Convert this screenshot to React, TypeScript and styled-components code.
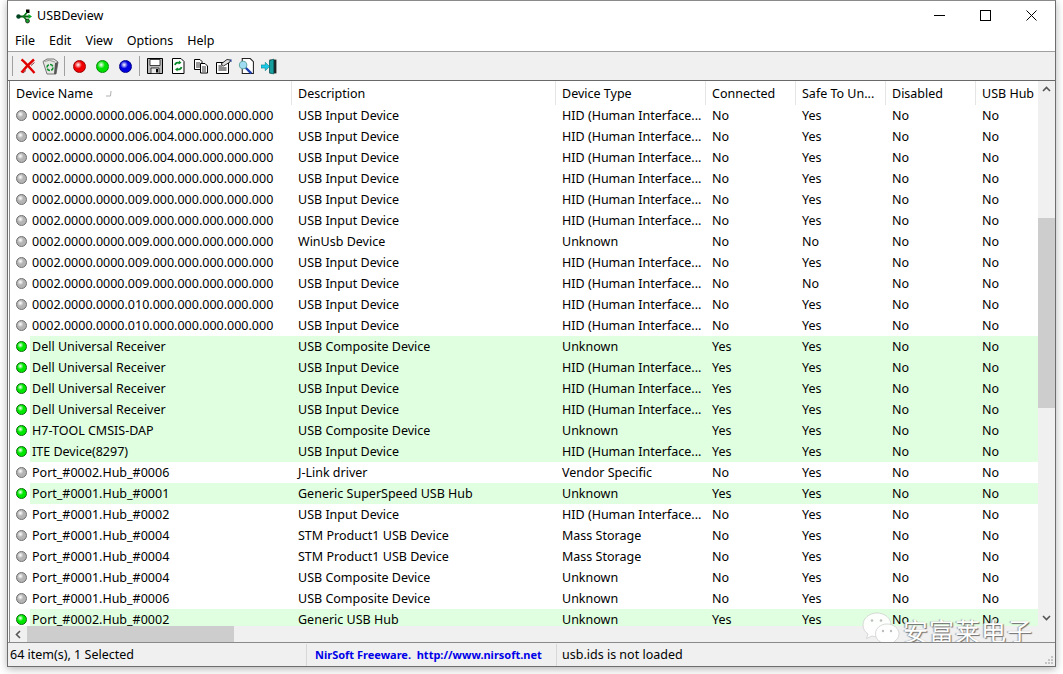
import styled, { createGlobalStyle } from 'styled-components';

const GlobalStyle = createGlobalStyle`
  html, body {
    margin: 0;
    padding: 0;
    background: #fff;
    overflow: hidden;
  }
  body {
    font-family: 'Noto Sans', 'Open Sans', sans-serif;
    font-size: 12.5px;
    color: #000;
  }
`;

type Device = {
  name: string;
  description: string;
  type: string;
  connected: string;
  safe: string;
};

const HID = 'HID (Human Interface...';
const INPUT = 'USB Input Device';
const COMPOSITE = 'USB Composite Device';

const devices: Device[] = [
  { name: '0002.0000.0000.006.004.000.000.000.000', description: INPUT, type: HID, connected: 'No', safe: 'Yes' },
  { name: '0002.0000.0000.006.004.000.000.000.000', description: INPUT, type: HID, connected: 'No', safe: 'Yes' },
  { name: '0002.0000.0000.006.004.000.000.000.000', description: INPUT, type: HID, connected: 'No', safe: 'Yes' },
  { name: '0002.0000.0000.009.000.000.000.000.000', description: INPUT, type: HID, connected: 'No', safe: 'Yes' },
  { name: '0002.0000.0000.009.000.000.000.000.000', description: INPUT, type: HID, connected: 'No', safe: 'Yes' },
  { name: '0002.0000.0000.009.000.000.000.000.000', description: INPUT, type: HID, connected: 'No', safe: 'Yes' },
  { name: '0002.0000.0000.009.000.000.000.000.000', description: 'WinUsb Device', type: 'Unknown', connected: 'No', safe: 'No' },
  { name: '0002.0000.0000.009.000.000.000.000.000', description: INPUT, type: HID, connected: 'No', safe: 'Yes' },
  { name: '0002.0000.0000.009.000.000.000.000.000', description: INPUT, type: HID, connected: 'No', safe: 'No' },
  { name: '0002.0000.0000.010.000.000.000.000.000', description: INPUT, type: HID, connected: 'No', safe: 'Yes' },
  { name: '0002.0000.0000.010.000.000.000.000.000', description: INPUT, type: HID, connected: 'No', safe: 'Yes' },
  { name: 'Dell Universal Receiver', description: COMPOSITE, type: 'Unknown', connected: 'Yes', safe: 'Yes' },
  { name: 'Dell Universal Receiver', description: INPUT, type: HID, connected: 'Yes', safe: 'Yes' },
  { name: 'Dell Universal Receiver', description: INPUT, type: HID, connected: 'Yes', safe: 'Yes' },
  { name: 'Dell Universal Receiver', description: INPUT, type: HID, connected: 'Yes', safe: 'Yes' },
  { name: 'H7-TOOL CMSIS-DAP', description: COMPOSITE, type: 'Unknown', connected: 'Yes', safe: 'Yes' },
  { name: 'ITE Device(8297)', description: INPUT, type: HID, connected: 'Yes', safe: 'Yes' },
  { name: 'Port_#0002.Hub_#0006', description: 'J-Link driver', type: 'Vendor Specific', connected: 'No', safe: 'Yes' },
  { name: 'Port_#0001.Hub_#0001', description: 'Generic SuperSpeed USB Hub', type: 'Unknown', connected: 'Yes', safe: 'Yes' },
  { name: 'Port_#0001.Hub_#0002', description: INPUT, type: HID, connected: 'No', safe: 'Yes' },
  { name: 'Port_#0001.Hub_#0004', description: 'STM Product1 USB Device', type: 'Mass Storage', connected: 'No', safe: 'Yes' },
  { name: 'Port_#0001.Hub_#0004', description: 'STM Product1 USB Device', type: 'Mass Storage', connected: 'No', safe: 'Yes' },
  { name: 'Port_#0001.Hub_#0004', description: COMPOSITE, type: 'Unknown', connected: 'No', safe: 'Yes' },
  { name: 'Port_#0001.Hub_#0006', description: COMPOSITE, type: 'Unknown', connected: 'No', safe: 'Yes' },
  { name: 'Port_#0002.Hub_#0002', description: 'Generic USB Hub', type: 'Unknown', connected: 'Yes', safe: 'Yes' },
];

const headers = ['Description', 'Device Type', 'Connected', 'Safe To Un...', 'Disabled', 'USB Hub'];
const COLUMNS = '264px 150px 90px 90px 90px 90px 62px';

export default function App() {
  return (
    <>
      <GlobalStyle />
      <Page>
        <Win>
          <TitleBar>
            <AppIcon />
            <TitleText>USBDeview</TitleText>
            <WindowButtons>
              <WindowButton>
                <svg width="11" height="11" viewBox="0 0 11 11"><path d="M0 5.5h11" stroke="#000" /></svg>
              </WindowButton>
              <WindowButton>
                <svg width="11" height="11" viewBox="0 0 11 11"><rect x=".5" y=".5" width="10" height="10" fill="none" stroke="#000" /></svg>
              </WindowButton>
              <WindowButton>
                <svg width="11" height="11" viewBox="0 0 11 11"><path d="M.5.5l10 10M10.5.5l-10 10" stroke="#000" /></svg>
              </WindowButton>
            </WindowButtons>
          </TitleBar>

          <MenuBar>
            <MenuItem>File</MenuItem>
            <MenuItem>Edit</MenuItem>
            <MenuItem>View</MenuItem>
            <MenuItem>Options</MenuItem>
            <MenuItem>Help</MenuItem>
          </MenuBar>

          <Toolbar>
            <ToolSeparator />
            <ToolButton><DeleteIcon /></ToolButton>
            <ToolButton><RecycleIcon /></ToolButton>
            <ToolSeparator />
            <ToolButton><Ball $size={13} $color="#f00000" $dark="#900" /></ToolButton>
            <ToolButton><Ball $size={13} $color="#00e000" $dark="#080" /></ToolButton>
            <ToolButton><Ball $size={13} $color="#0000e0" $dark="#008" /></ToolButton>
            <ToolSeparator />
            <ToolButton><SaveIcon /></ToolButton>
            <ToolButton><RefreshIcon /></ToolButton>
            <ToolButton><CopyIcon /></ToolButton>
            <ToolButton><PropertiesIcon /></ToolButton>
            <ToolButton><FindIcon /></ToolButton>
            <ToolButton><ExitIcon /></ToolButton>
          </Toolbar>

          <ListArea>
            <ListMain>
              <HeaderRow>
                <NameHeader>
                  Device Name
                  <SortMark viewBox="0 0 7 7" width="7" height="7">
                    <path d="M1 6h4.5L6 1" fill="none" stroke="#b0b0b0" />
                  </SortMark>
                </NameHeader>
                <Columns>
                  {headers.map((h) => (
                    <HeaderCell key={h}>{h}</HeaderCell>
                  ))}
                </Columns>
              </HeaderRow>

              <Rows>
                {devices.map((d, i) => {
                  const on = d.connected === 'Yes';
                  return (
                    <Row key={i}>
                      <BallCell>
                        {on ? (
                          <Ball $size={11} $color="#00e800" $dark="#006a00" />
                        ) : (
                          <Ball $size={11} $color="#b4b4b4" $dark="#6c6c6c" />
                        )}
                      </BallCell>
                      <RowBody $on={on}>
                        <NameCell>{d.name}</NameCell>
                        <Columns>
                          <Cell>{d.description}</Cell>
                          <Cell>{d.type}</Cell>
                          <Cell>{d.connected}</Cell>
                          <Cell>{d.safe}</Cell>
                          <Cell>No</Cell>
                          <Cell>No</Cell>
                        </Columns>
                      </RowBody>
                    </Row>
                  );
                })}
              </Rows>

              <HScroll>
                <ScrollArrow>
                  <svg width="9" height="9" viewBox="0 0 9 9"><path d="M6 1L2.5 4.5 6 8" fill="none" stroke="#555" strokeWidth="1.6" /></svg>
                </ScrollArrow>
                <HThumb />
              </HScroll>
            </ListMain>

            <VScroll>
              <ScrollArrow>
                <svg width="9" height="9" viewBox="0 0 9 9"><path d="M1 6l3.5-3.5L8 6" fill="none" stroke="#555" strokeWidth="1.6" /></svg>
              </ScrollArrow>
              <VThumb />
              <ScrollArrow>
                <svg width="9" height="9" viewBox="0 0 9 9"><path d="M1 3l3.5 3.5L8 3" fill="none" stroke="#555" strokeWidth="1.6" /></svg>
              </ScrollArrow>
              <Corner />
            </VScroll>

            <Watermark>
              <WeChatIcon />
              <WatermarkText>安富莱电子</WatermarkText>
            </Watermark>
          </ListArea>

          <StatusBar>
            <StatusCount>64 item(s), 1 Selected</StatusCount>
            <StatusLink>NirSoft Freeware.&nbsp; http://www.nirsoft.net</StatusLink>
            <StatusNote>usb.ids is not loaded</StatusNote>
            <Grip viewBox="0 0 9 9" width="9" height="9">
              <path d="M7 1h2v2H7zM4 4h2v2H4zM7 4h2v2H7zM1 7h2v2H1zM4 7h2v2H4zM7 7h2v2H7z" fill="#c4c4c4" />
            </Grip>
          </StatusBar>
        </Win>
      </Page>
    </>
  );
}

function AppIcon() {
  return (
    <TitleIcon viewBox="0 0 16 16" width="16" height="16">
      <path d="M1.5 8.5H14" stroke="#0a5a12" strokeWidth="2" />
      <path d="M10 1.5h3.5v3.5H10z" fill="#000" />
      <path d="M11 4.5L7.5 8.5l3.5 4" fill="none" stroke="#0a7a1a" strokeWidth="1.8" />
      <circle cx="2.5" cy="8.5" r="2.2" fill="#042" />
      <path d="M12.5 6l3.5 2.5-3.5 2.5z" fill="#0a2" />
      <circle cx="11.5" cy="13" r="2" fill="#1a9a2a" stroke="#000" strokeWidth=".6" />
    </TitleIcon>
  );
}

function DeleteIcon() {
  return (
    <svg viewBox="0 0 16 16" width="16" height="16">
      <path d="M1.5 1.5C5 4 10 10 14.5 15" fill="none" stroke="#e00000" strokeWidth="2.4" />
      <path d="M14 1.5C10 5 5 10 1.5 14.5" fill="none" stroke="#e00000" strokeWidth="2.4" />
      <path d="M3 15l3-2.5M11 7.5l3.5-3" stroke="#700" strokeWidth=".8" />
    </svg>
  );
}

function RecycleIcon() {
  return (
    <svg viewBox="0 0 17 17" width="17" height="17">
      <path d="M1 3.5L5 1h7l4 3-2 12H5z" fill="#e6e6e2" stroke="#777" />
      <path d="M2.5 3.5l5-1.2 5.5 1.8" fill="none" stroke="#999" />
      <path d="M13 5l-1 11h2l2-12z" fill="#555" />
      <circle cx="8" cy="9.5" r="3" fill="none" stroke="#109030" strokeWidth="1.6" strokeDasharray="3.4 1.2" />
    </svg>
  );
}

function SaveIcon() {
  return (
    <svg viewBox="0 0 16 16" width="16" height="16">
      <path d="M.5.5h15v15H.5z" fill="#b8b8b8" stroke="#000" />
      <path d="M3 1.5h10v6H3z" fill="#fff" stroke="#000" strokeWidth=".7" />
      <path d="M4 10h8v5.5H4z" fill="#e8e8e8" stroke="#000" strokeWidth=".7" />
      <path d="M9 11h2v3.5H9z" fill="#000" />
    </svg>
  );
}

function RefreshIcon() {
  return (
    <svg viewBox="0 0 16 16" width="16" height="16">
      <path d="M2.5.5H11l3 3v12H2.5z" fill="#fff" stroke="#000" />
      <path d="M5 7c.5-2 2.5-3 4.5-2" fill="none" stroke="#0a8a2a" strokeWidth="1.8" />
      <path d="M9 2.5l2.5 2.3L8.6 6.5z" fill="#0a8a2a" />
      <path d="M11.5 9c-.5 2-2.5 3-4.5 2" fill="none" stroke="#0a8a2a" strokeWidth="1.8" />
      <path d="M7.5 13.5L5 11.2 7.9 9.5z" fill="#0a8a2a" />
    </svg>
  );
}

function CopyIcon() {
  return (
    <svg viewBox="0 0 16 16" width="16" height="16">
      <path d="M1.5 1.5H7l2 2v8H1.5z" fill="#fff" stroke="#000" />
      <path d="M3 5h4M3 7h4M3 9h4" stroke="#000" strokeWidth=".8" />
      <path d="M7.5 5.5H12l2.5 2.5v7h-7z" fill="#fff" stroke="#000" />
      <path d="M9 9h4M9 11h4M9 13h4" stroke="#000" strokeWidth=".8" />
    </svg>
  );
}

function PropertiesIcon() {
  return (
    <svg viewBox="0 0 16 16" width="16" height="16">
      <path d="M.5 4.5h12v11H.5z" fill="#fff" stroke="#000" />
      <path d="M2.5 8h4M2.5 10h8M2.5 12h8" stroke="#000" strokeWidth=".9" />
      <path d="M5 6L11 1.5l3.5.5-.5 2-6.5 4z" fill="#ddd" stroke="#000" strokeWidth=".8" />
      <path d="M13.5 2l2-.8v3z" fill="#1a3a9a" />
    </svg>
  );
}

function FindIcon() {
  return (
    <svg viewBox="0 0 16 16" width="17" height="17">
      <path d="M4 .5h7.5l3 3v11H4z" fill="#fff" stroke="#222" />
      <path d="M6.5 8.5l6 6" stroke="#1c3fb0" strokeWidth="2.2" />
      <circle cx="4.8" cy="6.6" r="3.5" fill="#9fdcf2" stroke="#6aa" />
    </svg>
  );
}

function ExitIcon() {
  return (
    <svg viewBox="0 0 16 16" width="17" height="17">
      <path d="M8 1.5h6.5v13H8z" fill="#222" />
      <path d="M8 2.5l4-1.5v14l-4-1z" fill="#18a0a0" stroke="#0a5a5a" strokeWidth=".6" />
      <path d="M0 6.5h4V4l4 4-4 4V9.5H0z" fill="#1cc8e8" stroke="#077" strokeWidth=".5" />
    </svg>
  );
}

function WeChatIcon() {
  return (
    <svg viewBox="0 0 38 36" width="38" height="36">
      <path d="M15 1C7 1 1 6.500 1 13c0 4 2 7 5 9l-1.500 4.500L10 24c1.500.5 3.200.8 5 .8C23 24.800 29 19.500 29 13S23 1 15 1z" fill="#fff" stroke="#c8c8c8" strokeWidth=".7" />
      <path d="M25 12c-6.500 0-11.500 4.300-11.500 9.800s5 9.800 11.500 9.800c1.300 0 2.600-.2 3.800-.5l4.200 2.400-1-3.700c3-1.800 5-4.700 5-8 0-5.500-5.500-9.800-12-9.800z" fill="#fff" stroke="#c8c8c8" strokeWidth=".7" />
      <circle cx="10" cy="8.500" r="1.300" fill="#bbb" />
      <circle cx="19" cy="8.500" r="1.300" fill="#bbb" />
      <circle cx="21" cy="19" r="1.200" fill="#bbb" />
      <circle cx="29" cy="19" r="1.200" fill="#bbb" />
    </svg>
  );
}

const Page = styled.div`
  width: 1063px;
  height: 674px;
  padding-left: 7px;
  box-sizing: border-box;
`;

const Win = styled.div`
  width: 1049px;
  height: 667px;
  display: flex;
  flex-direction: column;
  background: #fff;
  border: 1px solid #6e6e6e;
  border-top: 1px solid #8a8a8a;
  box-sizing: border-box;
  box-shadow: 0 2px 8px rgba(0, 0, 0, 0.3);
`;

const TitleBar = styled.div`
  height: 29px;
  display: flex;
  align-items: center;
  padding-left: 8px;
  flex: none;
`;

const TitleIcon = styled.svg`
  margin-right: 5px;
`;

const TitleText = styled.span`
  font-size: 12.5px;
`;

const WindowButtons = styled.div`
  margin-left: auto;
  display: flex;
  margin-right: 1px;
`;

const WindowButton = styled.div`
  width: 46px;
  height: 29px;
  display: flex;
  align-items: center;
  justify-content: center;
`;

const MenuBar = styled.div`
  height: 21px;
  display: flex;
  align-items: center;
  flex: none;
  padding-left: 7px;
  gap: 14px;
  border-bottom: 1px solid #a0a0a0;
`;

const MenuItem = styled.span`
  font-size: 12.5px;
`;

const Toolbar = styled.div`
  height: 28px;
  flex: none;
  display: flex;
  align-items: center;
  padding-left: 2px;
  background: #f0f0f0;
  border-bottom: 1px solid #696969;
`;

const ToolSeparator = styled.div`
  width: 1px;
  height: 20px;
  background: #a0a0a0;
  margin: 0 3px 0 2px;
`;

const ToolButton = styled.div`
  width: 23px;
  height: 24px;
  display: flex;
  align-items: center;
  justify-content: center;
`;

const Ball = styled.span<{ $size: number; $color: string; $dark: string }>`
  display: block;
  width: ${(p) => p.$size}px;
  height: ${(p) => p.$size}px;
  border-radius: 50%;
  box-sizing: border-box;
  border: 1px solid ${(p) => p.$dark};
  background: radial-gradient(circle at 38% 35%, #fff 0, ${(p) => p.$color} 38%, ${(p) => p.$color} 100%);
`;

const ListArea = styled.div`
  flex: 1;
  min-height: 0;
  display: flex;
  position: relative;
  margin-left: 1px;
  border-left: 1px solid #8a8a8a;
`;

const ListMain = styled.div`
  flex: 1;
  min-width: 0;
  display: flex;
  flex-direction: column;
`;

const HeaderRow = styled.div`
  height: 24px;
  flex: none;
  display: flex;
`;

const NameHeader = styled.div`
  width: 282px;
  box-sizing: border-box;
  padding-left: 6px;
  display: flex;
  align-items: center;
  border-right: 1px solid #e5e5e5;
  flex: none;
`;

const SortMark = styled.svg`
  margin-left: 12px;
`;

const Columns = styled.div`
  display: grid;
  grid-template-columns: ${COLUMNS};
  flex: 1;
  min-width: 0;
`;

const HeaderCell = styled.div`
  display: flex;
  align-items: center;
  padding-left: 6px;
  border-right: 1px solid #e5e5e5;
  white-space: nowrap;
  overflow: hidden;
`;

const Rows = styled.div`
  flex: 1;
  min-height: 0;
  overflow: hidden;
`;

const Row = styled.div`
  height: 21px;
  display: flex;
`;

const BallCell = styled.div`
  width: 20px;
  flex: none;
  display: flex;
  align-items: center;
  padding-left: 6px;
  box-sizing: border-box;
`;

const RowBody = styled.div<{ $on: boolean }>`
  flex: 1;
  min-width: 0;
  display: flex;
  align-items: center;
  background: ${(p) => (p.$on ? '#e0ffe0' : 'transparent')};
`;

const NameCell = styled.div`
  width: 262px;
  flex: none;
  padding-left: 2px;
  box-sizing: border-box;
  white-space: nowrap;
`;

const Cell = styled.div`
  padding-left: 6px;
  white-space: nowrap;
  overflow: hidden;
`;

const HScroll = styled.div`
  height: 16px;
  flex: none;
  display: flex;
  background: #f0f0f0;
`;

const ScrollArrow = styled.div`
  width: 17px;
  height: 17px;
  flex: none;
  display: flex;
  align-items: center;
  justify-content: center;
`;

const HThumb = styled.div`
  width: 207px;
  background: #cdcdcd;
`;

const VScroll = styled.div`
  width: 17px;
  flex: none;
  display: flex;
  flex-direction: column;
  background: #f0f0f0;
`;

const VThumb = styled.div`
  height: 190px;
  margin-top: 120px;
  margin-bottom: auto;
  background: #cdcdcd;
`;

const Corner = styled.div`
  height: 16px;
  flex: none;
`;

const Watermark = styled.div`
  position: absolute;
  right: 22px;
  bottom: -6px;
  display: flex;
  align-items: center;
  gap: 3px;
  opacity: 0.95;
`;

const WatermarkText = styled.span`
  font-family: 'Noto Sans CJK SC', sans-serif;
  font-size: 25px;
  letter-spacing: 1px;
  color: #fff;
  text-shadow: 1px 1px 1px #666, -1px 0 1px #999;
`;

const StatusBar = styled.div`
  height: 23px;
  flex: none;
  display: flex;
  align-items: center;
  background: #f0f0f0;
  border-top: 1px solid #8a8a8a;
  position: relative;
`;

const StatusCount = styled.div`
  width: 299px;
  padding-left: 2px;
  box-sizing: border-box;
  border-right: 1px solid #d8d8d8;
  line-height: 22px;
`;

const StatusLink = styled.div`
  width: 250px;
  padding-left: 8px;
  box-sizing: border-box;
  border-right: 1px solid #d8d8d8;
  line-height: 22px;
  color: #0000e8;
  font-weight: 700;
  font-size: 11px;
  white-space: nowrap;
`;

const StatusNote = styled.div`
  padding-left: 5px;
`;

const Grip = styled.svg`
  position: absolute;
  right: 2px;
  bottom: 2px;
`;
